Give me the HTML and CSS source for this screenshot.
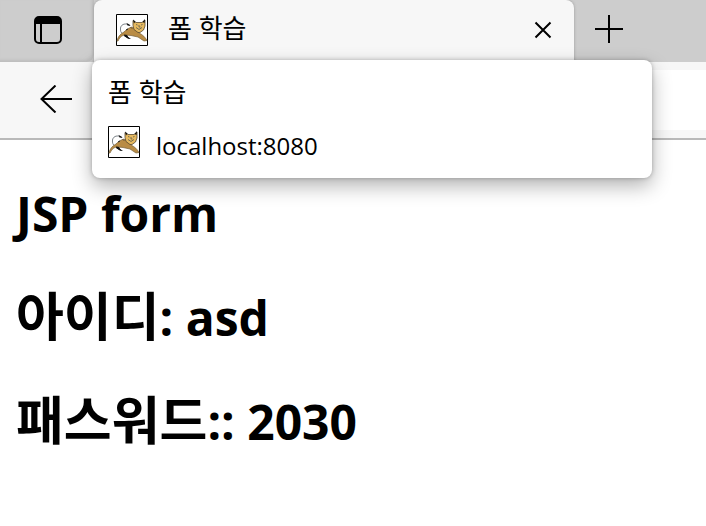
FILE: index.html
```
<!DOCTYPE html>
<html lang="ko">
<head>
<meta charset="utf-8">
<title>폼 학습</title>
<link rel="stylesheet" href="styles.css">
</head>
<body>
<svg class="defs" width="0" height="0" aria-hidden="true">
  <symbol id="cat" viewBox="0 0 32 32">
    <path fill="#fff" stroke="#000" d="M.5.5h31v31H.5z"/>
    <path d="M12 10.500C8 9 5 11 4.500 14c-.3 3 .5 5 2.500 6" fill="none" stroke="#7c8388"/>
    <path d="M10.500 9l3 1.500 1 1.500-3-.5z" fill="#111"/>
    <path d="M8 20.500l3 .5 1 2 3 2-3-.5-4-2.500z" fill="#111"/>
    <path d="M1 27c.8-4 3-7 7-9 2-2 4-4 8-5l4 3 3 3c4 2 6 4 8 7.500l-3 .5-6-4-7-1.500-5-.5c-4 0-6 2-8 6z" fill="#b98c45" stroke="#75603a" stroke-width=".7"/>
    <path d="M8 20.500l3 .5 1 2 2.500 2-2.500-.5-3-2z" fill="#111"/>
    <path d="M10 16l2-1M15 13.500l1 1" stroke="#222"/>
    <path d="M17 6.500l3 2h6l3-2.500v6l-1.500 4-3.500 2.500h-2l-4-3-1-4z" fill="#e6b95f" stroke="#57472e" stroke-width=".8"/>
    <path d="M17 5.500l2.500 2-1.500 2zM29 5l-2.500 3 2 1z" fill="#111"/>
    <path d="M20 10.500l1.500.5m5-.5l-1.500.5m-2 0v2h1.500M20 13.500l3 2 3-2" fill="none" stroke="#66634f" stroke-width=".9"/>
  </symbol>
</svg>
<header class="browser">
  <div class="tabstrip">
    <button class="tool workspace" type="button" aria-label="탭 작업 메뉴">
      <svg width="28" height="28" viewBox="0 0 28 28"><rect x="1" y="1" width="26" height="26" rx="4" fill="none" stroke="#000" stroke-width="2"/><path d="M1 8V5a4 4 0 0 1 4-4h18a4 4 0 0 1 4 4v3z"/><path d="M7 8v19" stroke="#000" stroke-width="2"/></svg>
    </button>
    <div class="tab">
      <svg class="favicon" aria-hidden="true"><use href="#cat"/></svg>
      <span class="tab-title">폼 학습</span>
      <button class="tool" type="button" aria-label="탭 닫기">
        <svg width="18" height="18" viewBox="0 0 18 18"><path d="M1.500 1.500l15 15m0-15l-15 15" stroke="#000" stroke-width="2"/></svg>
      </button>
      <div class="tooltip" role="tooltip">
        <div class="label">폼 학습</div>
        <div class="host"><svg class="favicon" aria-hidden="true"><use href="#cat"/></svg><span>localhost:8080</span></div>
      </div>
    </div>
    <button class="tool new-tab" type="button" aria-label="새 탭">
      <svg width="28" height="28" viewBox="0 0 28 28"><path d="M14 0v28M0 14h28" stroke="#000" stroke-width="2"/></svg>
    </button>
  </div>
  <div class="toolbar">
    <button class="tool" type="button" aria-label="뒤로">
      <svg width="32" height="28" viewBox="0 0 32 28"><path d="M15.500.500L1.500 14l14 13.500M1.500 14H32" fill="none" stroke="#000" stroke-width="2"/></svg>
    </button>
    <input class="address" type="text" aria-label="주소">
  </div>
</header>
<main>
  <h1>JSP form</h1>
  <h1><span class="ko">아이디</span>: asd</h1>
  <h1><span class="ko">패스워드</span>:: 2030</h1>
</main>
</body>
</html>
```
FILE: styles.css
```
* { box-sizing: border-box; }
body { margin: 0; background: #fff; color: #000; font-family: "Open Sans", "Noto Sans CJK KR", sans-serif; }
.defs { position: absolute; }
svg { display: block; flex: none; }
.tool { border: 0; padding: 0; background: none; flex: none; }
.favicon { width: 32px; height: 32px; }
.tabstrip { display: flex; height: 62px; padding-right: 80px; background: #cdcdcd; }
.workspace { width: 94px; padding: 0 32px 2px 34px; border-radius: 0 0 8px 0; box-shadow: inset -2px -2px 3px #bdbdbd; }
.tab { position: relative; flex: 1; display: flex; align-items: center; gap: 20px; padding: 0 22px 2px; background: #f7f7f7; border-radius: 8px 8px 0 0; box-shadow: 0 0 3px #999; }
.tab-title { flex: 1; padding-bottom: 4px; }
.tab-title, .label { font-size: 26px; line-height: 32px; }
.new-tab { width: 52px; padding: 0 3px 4px 21px; }
.toolbar { display: flex; align-items: center; gap: 24px; height: 78px; padding-left: 40px; background: #f7f7f7; border-bottom: 2px solid #b9b9b9; }
.toolbar .tool { padding-bottom: 2px; }
.address { flex: 1; min-width: 0; height: 60px; border: 0; border-radius: 8px 0 0 8px; background: #fff; font: inherit; font-size: 24px; padding: 0 16px; }
.tooltip { position: absolute; z-index: 2; top: 60px; left: -2px; right: -78px; padding: 16px 16px 12px; border-radius: 8px; background: #fff; box-shadow: 0 8px 20px rgba(0, 0, 0, .3), 0 0 4px rgba(0, 0, 0, .25); }
.host { display: flex; gap: 16px; margin-top: 18px; font-size: 24px; line-height: 40px; }
main { padding: 38px 16px; }
h1 { margin: 0 0 32px; font-size: 48px; line-height: 72px; font-weight: 700; }
.ko { font-size: 52px; line-height: 1; }
```
